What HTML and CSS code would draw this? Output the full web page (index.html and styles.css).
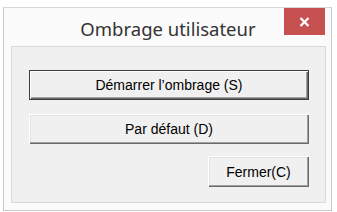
FILE: index.html
```html
<!DOCTYPE html>
<html lang="fr">
<head>
    <meta charset="UTF-8">
    <title>Ombrage utilisateur</title>
    <link rel="stylesheet" href="styles.css">
</head>
<body>
    <div class="window">
        <div class="titlebar">
            <span class="title">Ombrage utilisateur</span>
            <div class="close">
                <svg width="11" height="10" viewBox="0 0 11 10">
                    <path d="M1.5 1 L9.5 9 M9.5 1 L1.5 9" stroke="#fff" stroke-width="2.3" fill="none"/>
                </svg>
            </div>
        </div>
        <div class="panel">
            <button class="btn btn-default">Démarrer l’ombrage (S)</button>
            <button class="btn">Par défaut (D)</button>
            <div class="row-end">
                <button class="btn btn-small">Fermer(C)</button>
            </div>
        </div>
    </div>
</body>
</html>
```

FILE: styles.css
```css
body {
    margin: 0;
    background: #fff;
    font-family: "Liberation Sans", Arial, sans-serif;
}

.window {
    margin: 7px 0 0 3px;
    width: 329px;
    height: 204px;
    box-sizing: border-box;
    border: 1px solid #c9c9c9;
    border-top-color: #d6d6d6;
    background: #fbfbfb;
    padding: 0 6px 0 7px;
}

.titlebar {
    position: relative;
    height: 38px;
    display: flex;
    align-items: center;
    justify-content: center;
}

.title {
    font-family: "Noto Sans", "Open Sans", sans-serif;
    font-size: 18.5px;
    color: #333;
    margin-top: 3px;
}

.close {
    position: absolute;
    right: 0;
    top: 0;
    width: 41px;
    height: 27px;
    background: #c75050;
    display: flex;
    align-items: center;
    justify-content: center;
}

.panel {
    width: 315px;
    height: 157px;
    box-sizing: border-box;
    border: 1px solid #dadada;
    background: #f0f0f0;
    padding: 23px 16px 0 17px;
    display: flex;
    flex-direction: column;
    gap: 14px;
}

.btn {
    font-family: "Liberation Sans", Arial, sans-serif;
    font-size: 14px;
    color: #000;
    background: #f0f0f0;
    width: 280px;
    height: 30px;
    padding: 0;
    border: none;
    border-radius: 0;
    box-shadow: inset 1px 1px #fff, inset -1px -1px #696969, inset -2px -2px #a0a0a0, inset 2px 2px #e3e3e3;
}

.btn-default {
    border: 1px solid #3c3c3c;
    box-shadow: inset 1px 1px #fff, inset -1px -1px #696969, inset -2px -2px #a0a0a0;
}

.row-end {
    display: flex;
    justify-content: flex-end;
    margin-top: -2px;
}

.btn-small {
    width: 101px;
    height: 31px;
}
```
